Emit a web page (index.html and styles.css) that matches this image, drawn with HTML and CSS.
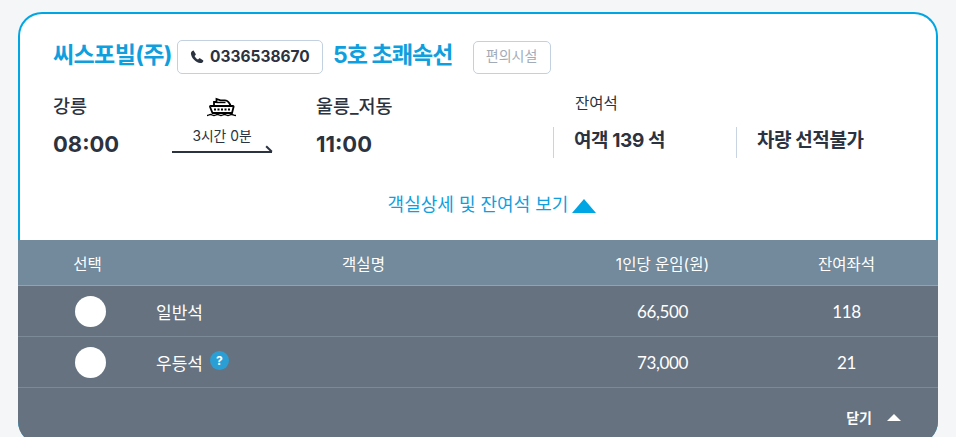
FILE: index.html
```html
<!DOCTYPE html>
<html lang="ko">
<head>
  <meta charset="UTF-8">
  <meta name="viewport" content="width=device-width, initial-scale=1">
  <title>객실상세 및 잔여석</title>
  <link rel="stylesheet" href="styles.css">
</head>
<body>
  <div class="card">
    <div class="summary">
      <div class="title-row">
        <strong class="company">씨스포빌(주)</strong>
        <span class="phone">
          <svg class="phone-icon" viewBox="0 0 24 24" width="14" height="14"><path d="M6.6 1.6 9.8 7c.3.5.2 1.1-.2 1.5L7.8 10.2c1 2.4 3.400 4.900 6 6l1.700-1.800c.4-.4 1-.5 1.500-.2l5.300 3.200c.6.400.8 1.100.5 1.700-1 2.300-3 3.500-5.300 3.300C10 21.700 2.300 14 1.600 6.600 1.400 4.400 2.600 2.300 4.900 1.200c.6-.3 1.300-.1 1.700.4z" fill="#2b3240"/></svg>
          <span class="phone-number">0336538670</span>
        </span>
        <strong class="ship-name">5호 초쾌속선</strong>
        <span class="facility">편의시설</span>
      </div>

      <div class="route-row">
        <div class="port">
          <div class="port-name">강릉</div>
          <div class="port-time">08:00</div>
        </div>
        <div class="trip">
          <svg class="ship-icon" viewBox="0 0 32 20" width="32" height="20" fill="none" stroke="#000">
            <path d="M4.500 9h22.500c.5 0 .7.300.6.800L26 16H6.500L4 9.800c-.1-.5.100-.8.500-.8z" stroke-width="1.800"/>
            <path d="M8 9V5h2.500V2l4 1.300h4.500c2.500 0 5 2.700 5.500 5.700" stroke-width="1.800"/>
            <path d="M10.500 5.500h9" stroke-width="1.400"/>
            <path d="M8 12.500h17" stroke-width="1.800" stroke-dasharray="2 1.500"/>
            <path d="M1 18.500c1.500 0 2-1 3.500-1s2 1 3.500 1 2-1 3.500-1 2 1 3.500 1 2-1 3.500-1 2 1 3.500 1 2-1 3.500-1 2 1 4.500 1" stroke-width="1.300"/>
          </svg>
          <div class="trip-time">3시간 0분</div>
          <div class="trip-line"></div>
        </div>
        <div class="port port-end">
          <div class="port-name">울릉_저동</div>
          <div class="port-time">11:00</div>
        </div>
        <div class="seats">
          <div class="seats-label">잔여석</div>
          <div class="seats-row">
            <div class="seats-item">여객 139 석</div>
            <div class="seats-item">차량 선적불가</div>
          </div>
        </div>
      </div>

      <div class="toggle">객실상세 및 잔여석 보기 <span class="toggle-arrow"></span></div>
    </div>

    <div class="cabins">
      <div class="cabin-row cabin-head">
        <div>선택</div>
        <div>객실명</div>
        <div>1인당 운임(원)</div>
        <div>잔여좌석</div>
      </div>
      <div class="cabin-row">
        <div><span class="radio"></span></div>
        <div class="cabin-name">일반석</div>
        <div class="num">66,500</div>
        <div class="num">118</div>
      </div>
      <div class="cabin-row">
        <div><span class="radio"></span></div>
        <div class="cabin-name">우등석 <span class="help">?</span></div>
        <div class="num">73,000</div>
        <div class="num">21</div>
      </div>
      <div class="close">닫기 <span class="close-arrow"></span></div>
    </div>
  </div>
</body>
</html>
```

FILE: styles.css
```css
html, body {
  height: 437px;
  overflow: hidden;
}
body {
  font-family: Inter, 'Noto Sans CJK KR', sans-serif;
  margin: 0;
  padding: 12px 18px 0;
  background: #f4f6f8;
  color: #2b3240;
}
.card {
  width: 920px;
  height: 433px;
  box-sizing: border-box;
  border: 2px solid #00a5e3;
  border-bottom: 0;
  border-radius: 24px;
  background: #ffffff;
}
.summary {
  height: 226px;
  padding: 26px 33px 0;
  box-sizing: border-box;
}
.title-row {
  display: flex;
  align-items: center;
  height: 34px;
}
.company, .ship-name {
  padding-bottom: 8px;
  font-size: 23px;
  font-weight: 700;
  letter-spacing: -0.6px;
  color: #109fde;
  white-space: nowrap;
}
.ship-name {
  letter-spacing: -0.9px;
}
.phone {
  display: flex;
  align-items: center;
  gap: 6px;
  width: 146px;
  height: 34px;
  box-sizing: border-box;
  margin: 0 10px 0 5px;
  padding-left: 12px;
  border: 1px solid #c3d0e0;
  border-radius: 5px;
  font-size: 15.500px;
  font-weight: 700;
}
.phone-number {
  padding-bottom: 2px;
}
.facility {
  width: 78px;
  height: 33px;
  box-sizing: border-box;
  margin-left: 20px;
  border: 1px solid #c3d0e0;
  border-radius: 5px;
  font-size: 14px;
  line-height: 28px;
  text-align: center;
  color: #a3abb8;
}
.route-row {
  display: flex;
  margin-top: 20px;
}
.port {
  flex: none;
  width: 119px;
}
.port-end {
  width: 237px;
  margin-left: 44px;
}
.port-name {
  font-size: 18.500px;
  font-weight: 500;
  line-height: 24px;
}
.port-time {
  margin-top: 12px;
  font-size: 22px;
  font-weight: 700;
  line-height: 28px;
}
.trip {
  flex: none;
  width: 100px;
  text-align: center;
}
.ship-icon {
  display: block;
  margin: 3px auto 0;
}
.trip-time {
  font-size: 13.800px;
  line-height: 18px;
  margin-top: 10px;
}
.trip-line {
  position: relative;
  height: 2px;
  margin-top: 6px;
  background: #2b3240;
}
.trip-line::after {
  content: "";
  position: absolute;
  right: 2px;
  top: -6px;
  width: 2px;
  height: 8px;
  background: #2b3240;
  transform: rotate(-45deg);
}
.seats {
  flex: 1;
  min-width: 0;
}
.seats-label {
  margin-left: 22px;
  font-size: 15.500px;
  line-height: 20px;
}
.seats-row {
  display: flex;
  margin-top: 13px;
}
.seats-item {
  flex: none;
  width: 183px;
  height: 31px;
  box-sizing: border-box;
  padding-left: 20px;
  border-left: 1px solid #c9d4e2;
  font-size: 19px;
  font-weight: 700;
  line-height: 28px;
  letter-spacing: -0.4px;
}
.toggle {
  display: flex;
  justify-content: center;
  align-items: center;
  gap: 4px;
  margin-top: 32px;
  padding-left: 28px;
  font-size: 18px;
  color: #109fde;
}
.toggle-arrow {
  width: 0;
  height: 0;
  margin-top: 5px;
  border: 12px solid transparent;
  border-top: 0;
  border-bottom: 14px solid #00a5e3;
}
.cabins {
  margin: 0 -2px;
  height: 205px;
  background: #66727f;
  border-radius: 0 0 24px 24px;
  color: #ffffff;
  font-size: 15.500px;
}
.cabin-row {
  display: grid;
  grid-template-columns: 139px 413px 185px 183px;
  align-items: center;
  height: 50px;
  border-bottom: 1px solid #7c8997;
  text-align: center;
}
.cabin-head {
  height: 45px;
  background: #728a9c;
  border-bottom-color: #8fa3b2;
}
.radio {
  display: block;
  width: 31px;
  height: 31px;
  margin-left: 57px;
  border-radius: 50%;
  background: #ffffff;
}
.cabin-name {
  display: flex;
  align-items: center;
  gap: 7px;
  margin-left: -1px;
  font-size: 17px;
  text-align: left;
}
.help {
  width: 19px;
  height: 19px;
  margin-top: -4px;
  border-radius: 50%;
  background: #2a9fd6;
  font-size: 12px;
  font-weight: 700;
  line-height: 19px;
  text-align: center;
}
.num {
  font-family: Lato, sans-serif;
  font-size: 17px;
  letter-spacing: -0.4px;
}
.close {
  display: flex;
  justify-content: flex-end;
  align-items: center;
  gap: 15px;
  height: 58px;
  padding-right: 37px;
  font-size: 14px;
  font-weight: 700;
}
.close-arrow {
  width: 0;
  height: 0;
  border: 7px solid transparent;
  border-top: 0;
  border-bottom: 7px solid #ffffff;
}
```
